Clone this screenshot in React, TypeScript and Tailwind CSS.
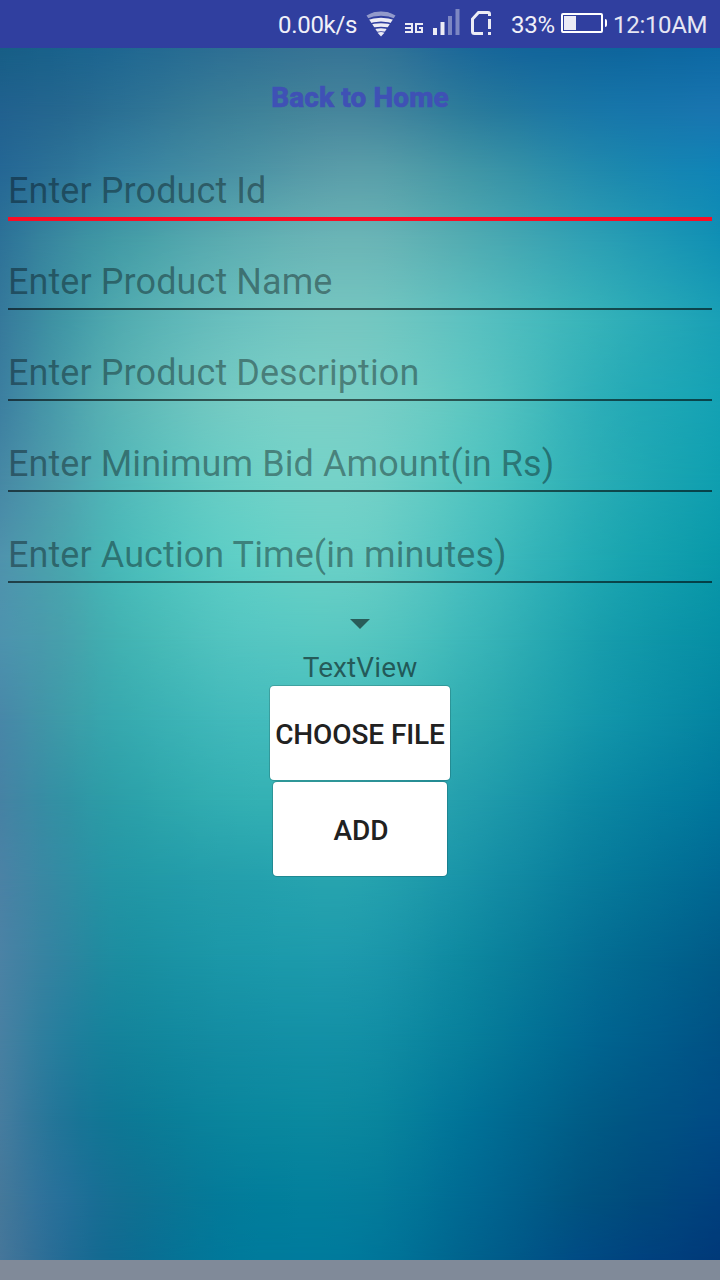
const meshColumns = [0, 60, 120, 240, 360, 480, 600, 720];

const meshRows: { y: number; colors: string }[] = [
  { y: 48, colors: "175e86 1a628c 1f6791 2f7094 357496 19679a 0f659c 0d69a4" },
  { y: 110, colors: "21618f 25678f 2b7094 3c8098 45859c 297a9c 1876a8 1975b0" },
  { y: 170, colors: "256795 2d7398 3681a0 4a91a4 5a9ea9 3e95a6 2089ad 0f84b7" },
  { y: 240, colors: "2d7298 3a8aa0 439ba6 5eaeb2 6bb5b6 4eabb2 2c9fb4 1090b4" },
  { y: 320, colors: "36799b 4095a5 51abb0 6bc1bf 75c7c1 58c0c0 35b2b9 1aa0b6" },
  { y: 400, colors: "3c7fa0 4a9dab 5bb4b5 76ccc4 79cfc6 5ac5c1 2caeb8 14a2b4" },
  { y: 480, colors: "4688a5 4fa0ae 53b8b9 6bcfc6 74d1c8 50c4c0 29adb5 0f9fb0" },
  { y: 560, colors: "4f93ad 4aa5ae 49bab9 5fcfc6 69cfc6 45bdbe 1fa8b2 0998a9" },
  { y: 640, colors: "4d93ae 479fac 42b2b2 53c5c1 56c6c0 39b5b8 189dac 068fa5" },
  { y: 720, colors: "4887a8 3e9aa8 37a9af 42babb 43bbbb 2daab0 1396aa 0484a1" },
  { y: 800, colors: "4682a4 3391a4 2c9fa8 33b0b3 33adb3 219cac 0b87a2 00769c" },
  { y: 880, colors: "4b82a5 338ba3 2396a5 249fac 26a3af 1690a6 077a9a 006893" },
  { y: 960, colors: "4b82a5 3084a0 1c8da0 1b98a9 1c98ab 0c859e 046d93 005b88" },
  { y: 1040, colors: "4880a2 257e9d 14839b 138da3 128fa5 067c9a 006490 005285" },
  { y: 1120, colors: "467c9f 217598 0e7895 0a869d 0a879e 007096 005a85 004b85" },
  { y: 1200, colors: "45789a 27709a 136f92 037c9a 047d9b 006791 00507e 00407d" },
  { y: 1260, colors: "46769a 256c95 0f6b91 007a9b 00789b 00608c 004882 003979" },
];

const STEPS = 6;

function channels(hex: string) {
  return [0, 2, 4].map((k) => parseInt(hex.slice(k, k + 2), 16));
}

// Catmull-Rom interpolation between the column colours keeps the gradient free of creases.
function smoothStops(colors: string) {
  const points = colors.split(" ").map(channels);
  const last = points.length - 1;
  const stops: string[] = [];
  for (let i = 0; i < last; i++) {
    const x0 = meshColumns[i];
    const x1 = meshColumns[i + 1];
    const slope = (j: number, k: number) => {
      const a = Math.max(j - 1, 0);
      const b = Math.min(j + 1, last);
      return (points[b][k] - points[a][k]) / (meshColumns[b] - meshColumns[a]);
    };
    for (let s = 0; s <= STEPS; s++) {
      if (s === STEPS && i < last - 1) continue;
      const t = s / STEPS;
      const w = x1 - x0;
      const rgb = [0, 1, 2].map((k) => {
        const value =
          (2 * t ** 3 - 3 * t ** 2 + 1) * points[i][k] +
          (t ** 3 - 2 * t ** 2 + t) * w * slope(i, k) +
          (-2 * t ** 3 + 3 * t ** 2) * points[i + 1][k] +
          (t ** 3 - t ** 2) * w * slope(i + 1, k);
        return Math.round(Math.min(255, Math.max(0, value)));
      });
      stops.push(`rgb(${rgb.join(" ")}) ${x0 + w * t}px`);
    }
  }
  return stops.join(", ");
}

// Each row fades in over the previous one, blending the colours in both directions.
function Backdrop() {
  return (
    <div className="absolute inset-0 overflow-hidden" aria-hidden="true">
      {meshRows.map((row, i) => {
        const mask =
          i === 0
            ? undefined
            : `linear-gradient(to bottom, transparent ${meshRows[i - 1].y - 48}px, black ${row.y - 48}px)`;
        return (
          <div
            key={row.y}
            className="absolute inset-0"
            style={{
              backgroundImage: `linear-gradient(to right, ${smoothStops(row.colors)})`,
              maskImage: mask,
            }}
          />
        );
      })}
    </div>
  );
}

function StatusBar() {
  return (
    <header className="flex h-12 shrink-0 items-center bg-[#303f9f] pl-[278px] text-[24px] leading-none tracking-[-0.3px] text-[#f0f0f8]">
      <span className="w-[88px] whitespace-nowrap pt-[2px]">0.00k/s</span>
      <svg className="shrink-0" width="126" height="48" viewBox="366 0 126 48">
        <clipPath id="fan">
          <path d="M366.5 15.5Q381 7 395.5 15.5L381 37.5Z" />
        </clipPath>
        <g clipPath="url(#fan)" fill="none" stroke="#ececf5">
          <path d="M364 17.5Q381 9.5 398 17.5" strokeWidth="4.4" stroke="#929acb" />
          <path d="M366 22.6Q381 16.6 396 22.6" strokeWidth="3.8" />
          <path d="M368 27.2Q381 22.8 394 27.2" strokeWidth="3.4" />
          <path d="M372 31.4Q381 28 390 31.4" strokeWidth="2.9" />
        </g>
        <path d="M377.5 32.8Q381 31.4 384.5 32.8L381 36.5Z" fill="#ececf5" />
        <g fill="none" stroke="#ececf5" strokeWidth="2">
          <path d="M405 24H412V32H405M405 28H412" />
          <path d="M423 24H416V32H422V28H419" />
        </g>
        <path d="M433 28h4v7h-4zM440.5 22h4v13h-4z" fill="#ececf5" />
        <path d="M448 16h4v19h-4zM455.5 9h4v26h-4z" fill="#7d87c3" />
        <path
          d="M483 33.5H474.5Q472.5 33.5 472.5 31.5V19L478.5 12.5H488Q489.5 12.5 489.5 14V16"
          fill="none"
          stroke="#ececf5"
          strokeWidth="3"
        />
        <path d="M488 19h3v10h-3zM488 32h3v3h-3z" fill="#ececf5" />
      </svg>
      <span className="ml-[19px] w-[49px] whitespace-nowrap pt-[2px]">33%</span>
      <svg className="shrink-0" width="48" height="48" viewBox="560 0 48 48">
        <rect x="562" y="14" width="40" height="18" rx="1" fill="none" stroke="#fff" strokeWidth="2" />
        <path d="M564 16h12v14h-12z" fill="#ebebf5" />
        <path d="M605 19q2 0 2 2v4q0 2-2 2z" fill="#fff" />
      </svg>
      <span className="ml-[5px] whitespace-nowrap pt-[2px] text-[#e6e6f3]">12:10AM</span>
    </header>
  );
}

const fields = [
  "Enter Product Id",
  "Enter Product Name",
  "Enter Product Description",
  "Enter Minimum Bid Amount(in Rs)",
  "Enter Auction Time(in minutes)",
];

export default function App() {
  return (
    <div className="flex h-[1280px] w-[720px] flex-col overflow-hidden font-['Roboto',sans-serif]">
      <StatusBar />
      <main className="relative flex-1">
        <Backdrop />
        <div className="relative flex flex-col items-center">
          <a className="mt-[34px] h-8 text-[28px] leading-8 font-extrabold tracking-[0.1px] text-[#3f51b5] [-webkit-text-stroke:0.6px_#3f51b5]">
            Back to Home
          </a>
          <form className="mt-[16px] flex w-full flex-col px-2">
            {fields.map((label, i) => (
              <label key={label} className="flex h-[91px] flex-col justify-end">
                <span className="mb-[5px] text-[36px] leading-[42px] tracking-[0.08px] whitespace-nowrap text-black/39">
                  {label}
                </span>
                <span className={i === 0 ? "h-1 bg-[#fa0d25]" : "mb-0.5 h-0.5 bg-black/58"} />
              </label>
            ))}
          </form>
          <svg className="mt-[34px]" width="20" height="10" viewBox="0 0 20 10">
            <path d="M0 0h20L10 10z" className="fill-black/54" />
          </svg>
          <p className="mt-[23px] h-8 text-[28px] leading-8 tracking-[0.1px] text-black/54">TextView</p>
          <button className="mt-[2px] h-[94px] w-[180px] rounded bg-white pt-[3px] text-[28px] font-medium tracking-[-0.1px] whitespace-nowrap text-[#212121] shadow-[0_0_0_1px_rgba(0,0,0,0.16)]">
            CHOOSE FILE
          </button>
          <button className="mt-0.5 h-[94px] w-[174px] rounded bg-white pt-[3px] pl-[2px] text-[28px] font-medium text-[#212121] shadow-[0_0_0_1px_rgba(0,0,0,0.16)]">
            ADD
          </button>
        </div>
      </main>
      <footer className="h-5 shrink-0 bg-[#808a99]" />
    </div>
  );
}
